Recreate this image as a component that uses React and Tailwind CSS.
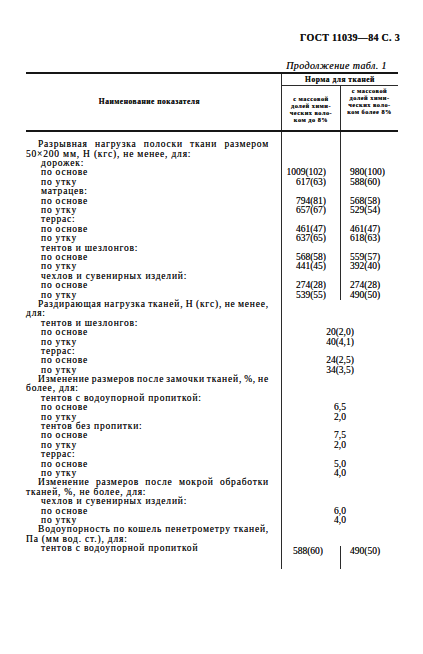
// App.jsx — страница ГОСТ 11039-84, продолжение табл. 1
const ROWS = [
  { t: 'Разрывная нагрузка полоски ткани размером', k: 'lead', split: true },
  { t: '50×200 мм, Н (кгс), не менее, для:', k: 'cont', split: true },
  { t: 'дорожек:', k: 'sub', split: true },
  { t: 'по основе', k: 'sub', split: true, v: ['1009(102)', '980(100)'] },
  { t: 'по утку', k: 'sub', split: true, v: ['617(63)', '588(60)'] },
  { t: 'матрацев:', k: 'sub', split: true },
  { t: 'по основе', k: 'sub', split: true, v: ['794(81)', '568(58)'] },
  { t: 'по утку', k: 'sub', split: true, v: ['657(67)', '529(54)'] },
  { t: 'террас:', k: 'sub', split: true },
  { t: 'по основе', k: 'sub', split: true, v: ['461(47)', '461(47)'] },
  { t: 'по утку', k: 'sub', split: true, v: ['637(65)', '618(63)'] },
  { t: 'тентов и шезлонгов:', k: 'sub', split: true },
  { t: 'по основе', k: 'sub', split: true, v: ['568(58)', '559(57)'] },
  { t: 'по утку', k: 'sub', split: true, v: ['441(45)', '392(40)'] },
  { t: 'чехлов и сувенирных изделий:', k: 'sub', split: true },
  { t: 'по основе', k: 'sub', split: true, v: ['274(28)', '274(28)'] },
  { t: 'по утку', k: 'sub', split: true, v: ['539(55)', '490(50)'] },
  { t: 'Раздирающая нагрузка тканей, Н (кгс), не менее,', k: 'lead' },
  { t: 'для:', k: 'cont' },
  { t: 'тентов и шезлонгов:', k: 'sub' },
  { t: 'по основе', k: 'sub', m: '20(2,0)' },
  { t: 'по утку', k: 'sub', m: '40(4,1)' },
  { t: 'террас:', k: 'sub' },
  { t: 'по основе', k: 'sub', m: '24(2,5)' },
  { t: 'по утку', k: 'sub', m: '34(3,5)' },
  { t: 'Изменение размеров после замочки тканей, %, не', k: 'lead' },
  { t: 'более, для:', k: 'cont' },
  { t: 'тентов с водоупорной пропиткой:', k: 'sub' },
  { t: 'по основе', k: 'sub', m: '6,5' },
  { t: 'по утку', k: 'sub', m: '2,0' },
  { t: 'тентов без пропитки:', k: 'sub' },
  { t: 'по основе', k: 'sub', m: '7,5' },
  { t: 'по утку', k: 'sub', m: '2,0' },
  { t: 'террас:', k: 'sub' },
  { t: 'по основе', k: 'sub', m: '5,0' },
  { t: 'по утку', k: 'sub', m: '4,0' },
  { t: 'Изменение размеров после мокрой обработки', k: 'lead' },
  { t: 'тканей, %, не более, для:', k: 'cont' },
  { t: 'чехлов и сувенирных изделий:', k: 'sub' },
  { t: 'по основе', k: 'sub', m: '6,0' },
  { t: 'по утку', k: 'sub', m: '4,0' },
  { t: 'Водоупорность по кошель пенетрометру тканей,', k: 'lead' },
  { t: 'Па (мм вод. ст.), для:', k: 'cont' },
]

const LINE = 'border-l-[1.5px] border-[#2b2b2b]'

function Label({ r }) {
  if (r.k === 'lead') {
    return (
      <div className="flex justify-between pl-[12px] pr-[12px] tracking-[0.8px]">
        {r.t.split(' ').map((w, i) => <span key={i}>{w}</span>)}
      </div>
    )
  }
  const pad = r.k === 'sub' ? 'pl-[15px]' : 'pl-0'
  return <div className={`whitespace-nowrap tracking-[0.8px] ${pad}`}>{r.t}</div>
}

function Row({ r }) {
  return (
    <div className="grid grid-cols-[255px_59px_58px] h-[9.4px] leading-[9.4px]">
      <Label r={r} />
      {r.split ? (
        <>
          <div className={`${LINE} text-right pr-[14px]`}>{r.v?.[0]}</div>
          <div className={`${LINE} pl-[9px]`}>{r.v?.[1]}</div>
        </>
      ) : (
        <div className={`${LINE} col-span-2 text-center`}>{r.m}</div>
      )}
    </div>
  )
}

function HeadCell({ lines }) {
  return (
    <div className="flex flex-col items-center justify-center pt-[1px] text-[6.3px] leading-[7px] font-bold tracking-[0.5px]">
      {lines.map((l, i) => <span key={i}>{l}</span>)}
    </div>
  )
}

export default function App() {
  return (
    <div className="min-h-screen bg-white text-[#111] font-['Liberation_Serif',serif] [text-shadow:0_0_0.5px_rgba(0,0,0,0.7)]">
      <div className="w-[374px] ml-[26px] pt-[32px]">
        <p className="text-right text-[10px] leading-[12px] font-bold tracking-[0.3px]">
          ГОСТ 11039—84 С. 3
        </p>
        <p className="mt-[16px] pr-[13px] text-right text-[10px] leading-[12px] italic tracking-[0.4px]">
          Продолжение табл. 1
        </p>
      </div>

      <div className="w-[372px] ml-[26px]">
        {/* шапка */}
        <div className="grid grid-cols-[255px_117px] border-t-2 border-b-2 border-[#161616]">
          <div className="flex items-center justify-center text-[7.5px] font-bold tracking-[0.5px] pb-[1px] pr-[8px]">
            Наименование показателя
          </div>
          <div className={`${LINE} flex flex-col`}>
            <div className="h-[12px] flex items-center justify-center text-[7.5px] font-bold tracking-[0.5px] border-b border-[#2b2b2b]">
              Норма для тканей
            </div>
            <div className="grid grid-cols-[58px_58px] h-[44px]">
              <HeadCell lines={['с массовой', 'долей хими-', 'ческих воло-', 'ком до 8%']} />
              <div className={LINE}>
                <HeadCell lines={['с массовой', 'долей хими-', 'ческих воло-', 'ком более 8%']} />
              </div>
            </div>
          </div>
        </div>

        {/* тело таблицы */}
        <div className="flex flex-col text-[9.5px]">
          <div className="grid grid-cols-[255px_59px_58px] h-[8.3px]">
            <div />
            <div className={LINE} />
            <div className={LINE} />
          </div>
          {ROWS.map((r, i) => <Row key={i} r={r} />)}
          <div className="grid grid-cols-[255px_59px_58px] h-[24.5px] leading-[9.4px]">
            <Label r={{ t: 'тентов с водоупорной пропиткой', k: 'sub' }} />
            <div className={`${LINE} text-right pr-[17px] pt-[3px]`}>588(60)</div>
            <div className="pt-[1.5px]">
              <div className={`${LINE} h-full pl-[9px] pt-[1.5px]`}>490(50)</div>
            </div>
          </div>
        </div>
      </div>
    </div>
  )
}
